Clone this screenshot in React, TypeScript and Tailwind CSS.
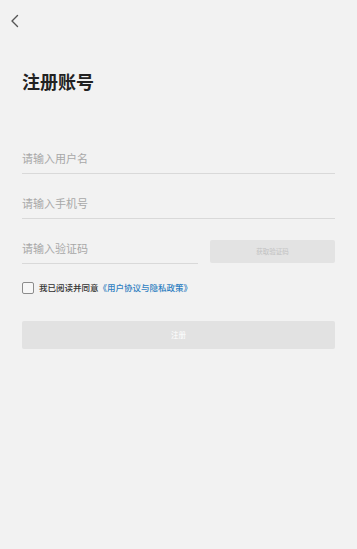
import React from "react";

export default function App() {
  const font = { fontFamily: '"Noto Sans CJK SC", "Noto Sans", sans-serif' };
  return (
    <div className="w-[357px] h-[549px] bg-[#f2f2f2] flex flex-col" style={font}>
      <div className="h-[41px] flex items-center pl-[9px] pt-[1px]">
        <svg width="12" height="14" viewBox="0 0 12 14" fill="none">
          <path d="M8.5 1.5 L3 7 L8.5 12.5" stroke="#555" strokeWidth="1.4" strokeLinecap="round" strokeLinejoin="round" />
        </svg>
      </div>
      <div className="px-[22px] mt-[27px]">
        <div className="text-[18px] font-bold text-[#222] leading-[26px]">注册账号</div>
      </div>
      <div className="px-[22px] mt-[47px] flex flex-col">
        <div className="h-[33px] border-b border-[#d9d9d9] flex items-center text-[11px] text-[#a8a8a8] pt-[2px]">请输入用户名</div>
        <div className="h-[45px] border-b border-[#d9d9d9] flex items-end pb-[7px] text-[11px] text-[#a8a8a8]">请输入手机号</div>
        <div className="flex items-end gap-[12px] h-[45px]">
          <div className="flex-1 h-full border-b border-[#d9d9d9] flex items-end pb-[7px] text-[11px] text-[#a8a8a8]">请输入验证码</div>
          <div className="w-[125px] h-[23px] mb-[2px] bg-[#e3e3e3] rounded-[2px] flex items-center justify-center text-[6.5px] text-[#c2c2c2] self-start mt-[21px]">获取验证码</div>
        </div>
        <div className="flex items-center mt-[17px] h-[13px]">
          <div className="w-[12px] h-[12px] border-[1.5px] border-[#8c8c8c] rounded-[2px] bg-white/40"></div>
          <span className="ml-[5px] text-[8.5px] font-medium text-[#333]">我已阅读并同意</span>
          <span className="text-[8.5px] font-medium text-[#2f7fc1]">《用户协议与隐私政策》</span>
        </div>
        <div className="mt-[27px] h-[28px] bg-[#e2e2e2] rounded-[2px] flex items-center justify-center text-[7.5px] text-white">注册</div>
      </div>
    </div>
  );
}
